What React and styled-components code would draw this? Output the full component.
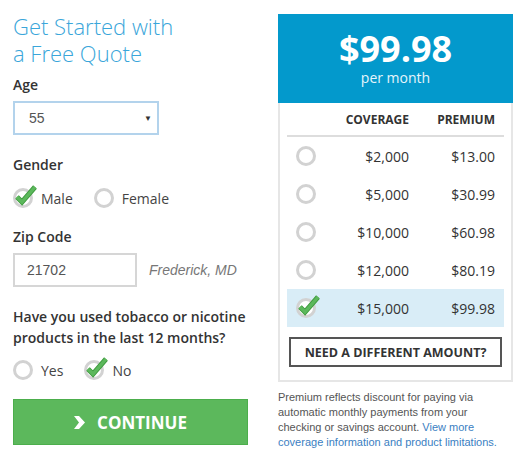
import React from "react";
import styled, { createGlobalStyle } from "styled-components";

const GlobalStyle = createGlobalStyle`
  body {
    margin: 0;
    background: #fff;
    font-family: "Open Sans", "Liberation Sans", sans-serif;
    color: #333;
  }
`;

const Page = styled.div`
  display: flex;
  gap: 30px;
  padding: 13px 13px 0;
  width: 529px;
  box-sizing: border-box;
`;

const FormColumn = styled.div`
  width: 235px;
  display: flex;
  flex-direction: column;
`;

const Title = styled.h1`
  margin: 0;
  font-size: 22px;
  line-height: 27px;
  font-weight: 300;
  color: #3aa6da;
`;

const FieldLabel = styled.div`
  margin-top: ${(p) => p.$top}px;
  font-size: 14px;
  line-height: 20px;
  font-weight: 600;
  color: #333;
`;

const SelectBox = styled.div`
  margin-top: 6px;
  width: 146px;
  height: 34px;
  box-sizing: border-box;
  border: 2px solid #b3d3ec;
  display: flex;
  align-items: center;
  justify-content: space-between;
  padding: 0 5px 0 14px;
  font-family: "Liberation Sans", Arial, sans-serif;
  font-size: 14px;
  color: #555;

  .arrow {
    font-size: 8px;
    color: #333;
  }
`;

const RadioGroup = styled.div`
  margin-top: ${(p) => p.$top}px;
  display: flex;
  align-items: center;
  gap: 21px;
  height: 24px;
`;

const RadioOption = styled.label`
  display: flex;
  align-items: center;
  gap: 8px;
  font-size: 14px;
  color: #444;
`;

const RadioCircle = styled.span`
  position: relative;
  display: inline-block;
  width: 20px;
  height: 20px;
  box-sizing: border-box;
  border: 3px solid #d2d2d2;
  border-radius: 50%;
  background: #fff;
  flex-shrink: 0;

  svg {
    position: absolute;
    left: -3px;
    top: -9px;
    overflow: visible;
  }
`;

const ZipRow = styled.div`
  margin-top: 6px;
  display: flex;
  align-items: center;
  gap: 12px;
`;

const ZipInput = styled.div`
  width: 124px;
  height: 34px;
  box-sizing: border-box;
  border: 2px solid #d6d6d6;
  display: flex;
  align-items: center;
  padding-left: 12px;
  font-family: "Liberation Sans", Arial, sans-serif;
  font-size: 14px;
  color: #555;
`;

const City = styled.span`
  font-family: "Liberation Sans", Arial, sans-serif;
  font-style: italic;
  font-size: 14px;
  color: #777;
`;

const Question = styled.div`
  margin-top: 19px;
  font-size: 14px;
  line-height: 21px;
  font-weight: 600;
  color: #333;
`;

const ContinueButton = styled.button`
  margin-top: 17px;
  width: 235px;
  height: 46px;
  border: 1px solid #4cae4c;
  background: #5cb85c;
  color: #fff;
  display: flex;
  align-items: center;
  justify-content: center;
  gap: 12px;
  font-family: "Open Sans", sans-serif;
  font-size: 17px;
  font-weight: 700;
  padding: 0;
  cursor: pointer;
`;

const QuoteColumn = styled.div`
  width: 235px;
  margin-top: 1px;
  display: flex;
  flex-direction: column;
`;

const PriceHeader = styled.div`
  background: #0399cc;
  color: #fff;
  text-align: center;
  padding: 15px 0 16px;

  .amount {
    font-size: 36px;
    line-height: 40px;
    font-weight: 700;
  }
  .period {
    font-size: 14px;
    line-height: 18px;
    color: #e6f5fb;
  }
`;

const CardBody = styled.div`
  border: 2px solid #e6e6e6;
  border-top: none;
  padding: 0 7px 13px;
`;

const TableRow = styled.div`
  display: grid;
  grid-template-columns: 40px 1fr 86px;
  align-items: center;
  padding: 0 9px;
  height: ${(p) => (p.$head ? 32 : 38)}px;
  background: ${(p) => (p.$selected ? "#d9edf7" : "transparent")};
  border-bottom: ${(p) => (p.$head ? "2px solid #dddddd" : "none")};
  font-size: ${(p) => (p.$head ? 12 : 14)}px;
  font-weight: ${(p) => (p.$head ? 700 : 400)};
  color: #333;

  .num {
    text-align: right;
  }
`;

const OutlineButton = styled.button`
  margin: 10px 2px 0;
  width: calc(100% - 4px);
  height: 30px;
  box-sizing: border-box;
  border: 2px solid #555;
  background: #fff;
  font-family: "Open Sans", sans-serif;
  font-size: 12.5px;
  font-weight: 700;
  color: #333;
  padding: 0;
`;

const Footnote = styled.p`
  margin: 8px 0 0;
  font-family: "Liberation Sans", Arial, sans-serif;
  font-size: 11px;
  line-height: 15px;
  color: #555;

  a {
    color: #3a80c2;
    text-decoration: none;
  }
`;

const CheckMark = () => (
  <svg width="26" height="24" viewBox="0 0 26 24">
    <path d="M4 15 L9 20 L22 5" fill="none" stroke="#3e9a3e" strokeWidth="5" />
    <path d="M4 15 L9 20 L22 5" fill="none" stroke="#5cb85c" strokeWidth="3.4" />
  </svg>
);

const Radio = ({ checked }) => (
  <RadioCircle>{checked && <CheckMark />}</RadioCircle>
);

const Chevron = () => (
  <svg width="11" height="13" viewBox="0 0 11 13">
    <polygon points="0,0 5,0 11,6.5 5,13 0,13 5,6.5" fill="#fff" />
  </svg>
);

const rows = [
  { coverage: "$2,000", premium: "$13.00" },
  { coverage: "$5,000", premium: "$30.99" },
  { coverage: "$10,000", premium: "$60.98" },
  { coverage: "$12,000", premium: "$80.19" },
  { coverage: "$15,000", premium: "$99.98", selected: true },
];

export default function App() {
  return (
    <>
      <GlobalStyle />
      <Page>
        <FormColumn>
          <Title>
            Get Started with
            <br />a Free Quote
          </Title>

          <FieldLabel $top={8}>Age</FieldLabel>
          <SelectBox>
            <span>55</span>
            <span className="arrow">▼</span>
          </SelectBox>

          <FieldLabel $top={20}>Gender</FieldLabel>
          <RadioGroup $top={11}>
            <RadioOption>
              <Radio checked />
              Male
            </RadioOption>
            <RadioOption>
              <Radio />
              Female
            </RadioOption>
          </RadioGroup>

          <FieldLabel $top={17}>Zip Code</FieldLabel>
          <ZipRow>
            <ZipInput>21702</ZipInput>
            <City>Frederick, MD</City>
          </ZipRow>

          <Question>
            Have you used tobacco or nicotine
            <br />
            products in the last 12 months?
          </Question>
          <RadioGroup $top={10}>
            <RadioOption>
              <Radio />
              Yes
            </RadioOption>
            <RadioOption>
              <Radio checked />
              No
            </RadioOption>
          </RadioGroup>

          <ContinueButton>
            <Chevron />
            CONTINUE
          </ContinueButton>
        </FormColumn>

        <QuoteColumn>
          <PriceHeader>
            <div className="amount">$99.98</div>
            <div className="period">per month</div>
          </PriceHeader>
          <CardBody>
            <TableRow $head>
              <span />
              <span className="num">COVERAGE</span>
              <span className="num">PREMIUM</span>
            </TableRow>
            {rows.map((r) => (
              <TableRow key={r.coverage} $selected={r.selected}>
                <Radio checked={r.selected} />
                <span className="num">{r.coverage}</span>
                <span className="num">{r.premium}</span>
              </TableRow>
            ))}
            <OutlineButton>NEED A DIFFERENT AMOUNT?</OutlineButton>
          </CardBody>
          <Footnote>
            Premium reflects discount for paying via automatic monthly payments
            from your checking or savings account.{" "}
            <a href="#">View more coverage information and product limitations.</a>
          </Footnote>
        </QuoteColumn>
      </Page>
    </>
  );
}
